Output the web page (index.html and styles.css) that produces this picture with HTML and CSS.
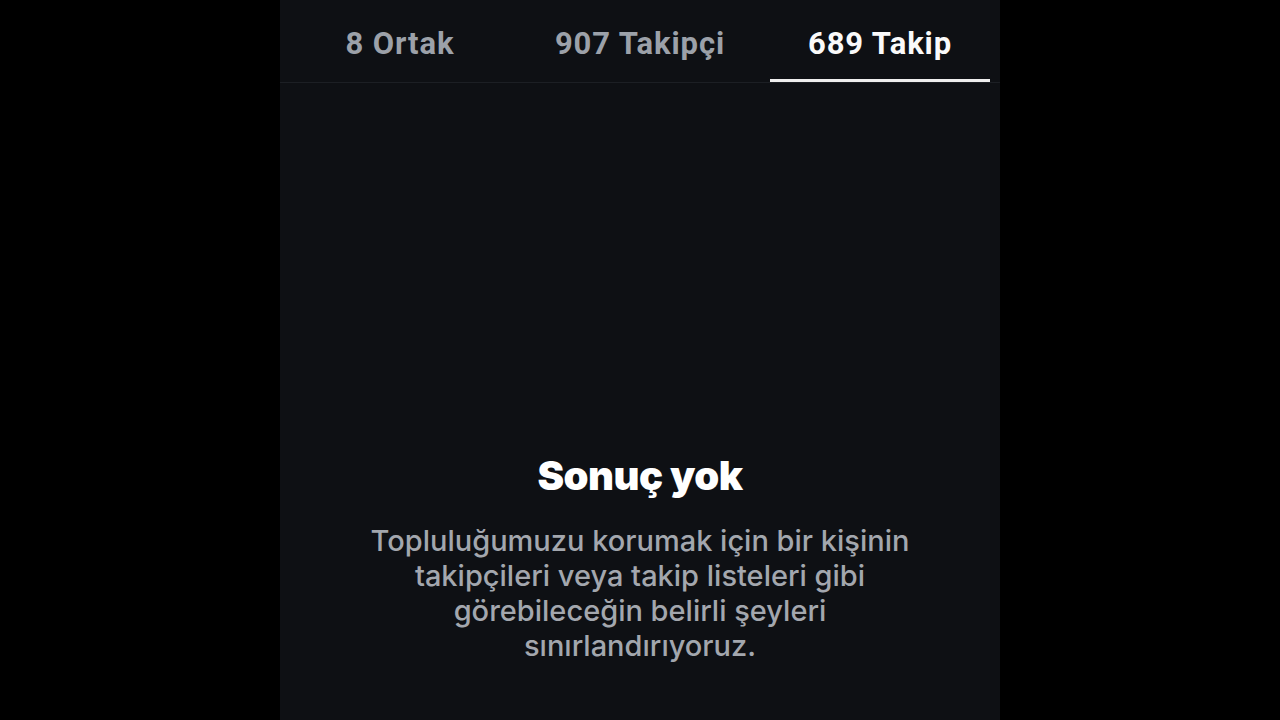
FILE: index.html
```html
<!DOCTYPE html>
<html lang="tr">
<head>
<meta charset="utf-8">
<link rel="stylesheet" href="styles.css">
</head>
<body>
<div class="page">
  <main class="panel">
    <nav class="tabs">
      <div class="tab">8 Ortak</div>
      <div class="tab">907 Takipçi</div>
      <div class="tab active">689 Takip</div>
    </nav>
    <section class="empty">
      <h1 class="empty-title">Sonuç yok</h1>
      <p class="empty-text">Topluluğumuzu korumak için bir kişinin takipçileri veya takip listeleri gibi görebileceğin belirli şeyleri sınırlandırıyoruz.</p>
    </section>
  </main>
</div>
</body>
</html>
```
FILE: styles.css
```css
html, body {
  margin: 0;
  padding: 0;
  background: #000;
}
.page {
  display: flex;
  justify-content: center;
  height: 720px;
  overflow: hidden;
}
.panel {
  width: 720px;
  height: 720px;
  background: #0e1014;
  display: flex;
  flex-direction: column;
}
.tabs {
  display: flex;
  height: 82px;
  border-bottom: 1px solid #1c1f24;
}
.tab {
  flex: 1;
  display: flex;
  align-items: center;
  justify-content: center;
  font-family: Roboto, "Liberation Sans", sans-serif;
  font-weight: 700;
  font-size: 31px;
  letter-spacing: 0.9px;
  color: #9ca1a9;
  position: relative;
  padding-top: 4px;
}
.tab.active {
  color: #fafafa;
}
.tab.active::after {
  content: "";
  position: absolute;
  left: 10px;
  right: 10px;
  bottom: 0;
  height: 3px;
  background: #eeeeee;
}
.empty {
  display: flex;
  flex-direction: column;
  align-items: center;
  padding-top: 370px;
  text-align: center;
}
.empty-title {
  margin: 0;
  font-family: Inter, "Noto Sans", sans-serif;
  font-weight: 900;
  font-size: 40px;
  line-height: 46px;
  color: #ffffff;
  letter-spacing: -0.5px;
}
.empty-text {
  margin: 24px 0 0;
  width: 580px;
  font-family: Inter, "Noto Sans", sans-serif;
  font-weight: 500;
  font-size: 29px;
  line-height: 35px;
  color: #a3a7ae;
}
```
